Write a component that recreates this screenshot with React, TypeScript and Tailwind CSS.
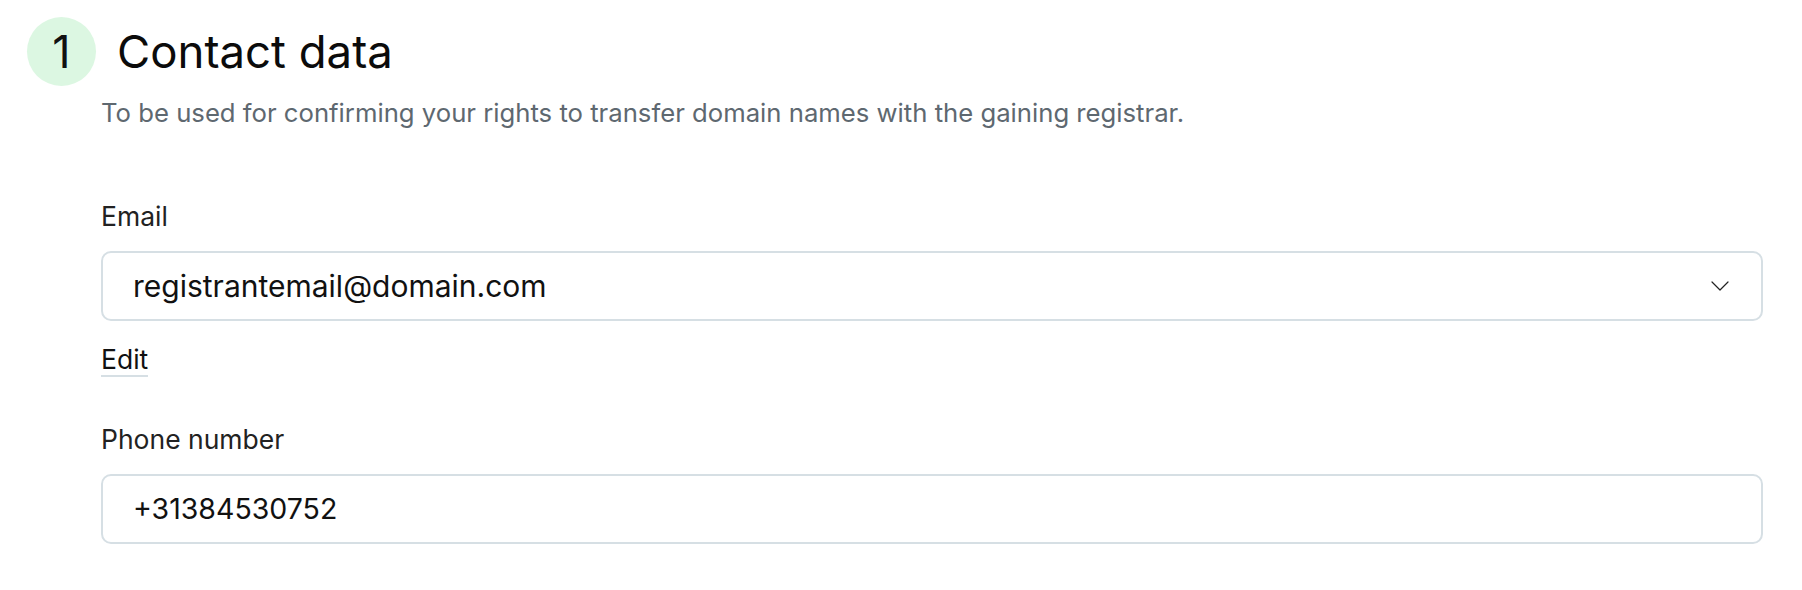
const font = { fontFamily: 'Inter, "Noto Sans", sans-serif' };

function Chevron() {
  return (
    <svg width="18" height="10" viewBox="0 0 18 10" fill="none" className="text-[#222]">
      <path d="M1 1l8 8 8-8" stroke="currentColor" strokeWidth="1.2" strokeLinecap="round" strokeLinejoin="round" />
    </svg>
  );
}

function Field({
  label,
  value,
  select,
  valueSize = 'text-[30px]',
}: {
  label: string;
  value: string;
  select?: boolean;
  valueSize?: string;
}) {
  return (
    <div className="flex flex-col">
      <label className="text-[26.5px] leading-[32px] text-[#222]">{label}</label>
      <div className="mt-[19px] flex h-[70px] items-center justify-between rounded-[10px] border-2 border-[#d6dfe4] bg-white pl-[30px] pr-[32px]">
        <span className={`${valueSize} text-[#111]`}>{value}</span>
        {select && <Chevron />}
      </div>
    </div>
  );
}

export default function App() {
  return (
    <div className="min-h-screen bg-white pl-[27px] pr-[39px] pt-[17px]" style={font}>
      <div className="flex items-center gap-[21px]">
        <div className="flex h-[69px] w-[69px] items-center justify-center rounded-full bg-[#dcf7e2] text-[45px] text-[#111]">
          1
        </div>
        <h1 className="text-[45.5px] leading-[52px] text-[#0b0b0b]">Contact data</h1>
      </div>

      <div className="pl-[74px]">
        <p className="mt-[11px] text-[25.7px] leading-[32px] text-[#5e6870]">
          To be used for confirming your rights to transfer domain names with the gaining registrar.
        </p>

        <div className="mt-[71px]">
          <Field label="Email" value="registrantemail@domain.com" select />
          <button className="mt-[22px] border-b-2 border-[#d6dfe4] text-[26.5px] leading-[32px] text-[#111]">
            Edit
          </button>
        </div>

        <div className="mt-[46px]">
          <Field label="Phone number" value="+31384530752" valueSize="text-[28.5px]" />
        </div>
      </div>
    </div>
  );
}
